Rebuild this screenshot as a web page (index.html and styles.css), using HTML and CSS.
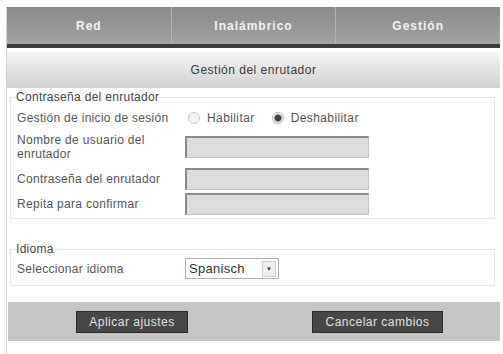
FILE: index.html
```html
<!DOCTYPE HTML><html>
<head>
  <title>Gestión del enrutador</title>
  <meta name="viewport" content="width=device-width, initial-scale=1">
  <meta content="text/html; charset=utf-8" http-equiv="Content-Type" />
  <link rel="stylesheet" href="styles.css">
</head>

<body>
  <div class="page">
    <div class="topnav">
      <div class="tab">Red</div>
      <div class="tab">Inalámbrico</div>
      <div class="tab">Gestión</div>
    </div>
    <div class="title">Gestión del enrutador</div>

    <div class="content">
      <fieldset class="group">
        <legend>Contraseña del enrutador</legend>
        <div class="row first">
          <div class="label">Gestión de inicio de sesión</div>
          <div class="field">
            <label class="radio"><span class="dot"></span>Habilitar</label>
            <label class="radio"><span class="dot on"></span>Deshabilitar</label>
          </div>
        </div>
        <div class="row tall">
          <div class="label">Nombre de usuario del enrutador</div>
          <div class="field"><div class="input"></div></div>
        </div>
        <div class="row mid">
          <div class="label">Contraseña del enrutador</div>
          <div class="field"><div class="input"></div></div>
        </div>
        <div class="row">
          <div class="label">Repita para confirmar</div>
          <div class="field"><div class="input"></div></div>
        </div>
      </fieldset>

      <fieldset class="group lang">
        <legend>Idioma</legend>
        <div class="row">
          <div class="label">Seleccionar idioma</div>
          <div class="field">
            <div class="select"><span>Spanisch</span><span class="arrow">&#9660;</span></div>
          </div>
        </div>
      </fieldset>
    </div>

    <div class="actions">
      <button class="button apply">Aplicar ajustes</button>
      <button class="button cancel">Cancelar cambios</button>
    </div>
  </div>
</body>
</html>
```

FILE: styles.css
```css
html {
  font-family: "Liberation Sans", Arial, Helvetica, sans-serif;
  font-size: 12px;
  letter-spacing: 0.3px;
  color: #555;
}
body {
  margin: 0;
  background-color: #fff;
}
.page {
  margin: 7px 3px 0 6px;
  border-left: 1px solid #d0d0d0;
  min-height: 347px;
}
.topnav {
  display: flex;
  height: 37px;
  background: linear-gradient(#8a8a8a, #a2a2a2);
  border-bottom: 4px solid #3c3c3c;
}
.tab {
  flex: 1;
  display: flex;
  align-items: center;
  justify-content: center;
  color: #f2f2f2;
  font-size: 12px;
  font-weight: bold;
  letter-spacing: 1px;
  border-right: 1px solid #b2b2b2;
}
.tab:last-child {
  border-right: none;
}
.title {
  margin-top: 4px;
  height: 36px;
  display: flex;
  align-items: center;
  justify-content: center;
  color: #3a3a3a;
  letter-spacing: 0.5px;
  background: linear-gradient(#f4f4f4, #d2d2d2);
}
.content {
  padding: 2px 5px 16px 3px;
}
.group {
  margin: 0;
  padding: 0 8px 2px 6px;
  border: 1px solid #e6e6e6;
}
.group legend {
  padding: 0;
  margin-left: -1px;
  color: #444;
}
.lang {
  margin-top: 23px;
  padding-bottom: 4px;
}
.row {
  display: grid;
  grid-template-columns: 168px auto;
  align-items: center;
  height: 25px;
}
.row.first {
  height: 27px;
}
.row.tall {
  height: 32px;
}
.row.mid {
  height: 24px;
  padding-top: 4px;
}
.label {
  line-height: 14px;
  padding-right: 14px;
}
.field {
  display: flex;
  align-items: center;
}
.radio {
  display: flex;
  align-items: center;
  margin-right: 14px;
  font-size: 12px;
  letter-spacing: 0.4px;
}
.dot {
  width: 10px;
  height: 10px;
  border: 1px solid #c8c8c8;
  border-radius: 50%;
  margin: 0 7px 0 3px;
  background-color: #f2f2f2;
}
.dot.on {
  background: radial-gradient(#444 45%, #e8e8e8 55%);
  border-color: #bbb;
}
.input {
  width: 181px;
  height: 19px;
  background-color: #dcdcdc;
  border: 1px solid #c4c4c4;
  border-top: 2px solid #8a8a8a;
  border-left: 2px solid #8a8a8a;
}
.select {
  display: flex;
  align-items: center;
  justify-content: space-between;
  width: 94px;
  height: 21px;
  border: 1px solid #b0b0b0;
  padding-left: 3px;
  box-sizing: border-box;
  font-size: 13px;
  color: #333;
}
.arrow {
  width: 12px;
  height: 14px;
  margin-right: 2px;
  font-size: 6px;
  display: flex;
  align-items: center;
  justify-content: center;
  border: 1px solid #ccc;
  background-color: #eee;
  color: #333;
}
.actions {
  display: flex;
  align-items: center;
  height: 39px;
  margin-left: 1px;
  padding-left: 68px;
  background-color: #c6c6c6;
}
.button {
  height: 22px;
  padding: 0;
  font-family: inherit;
  font-size: 12px;
  letter-spacing: 0.5px;
  color: #e0e0e0;
  background-color: #474747;
  border: 1px solid #2a2a2a;
  border-radius: 0;
}
.apply {
  width: 112px;
}
.cancel {
  width: 131px;
  margin-left: 124px;
}
```
